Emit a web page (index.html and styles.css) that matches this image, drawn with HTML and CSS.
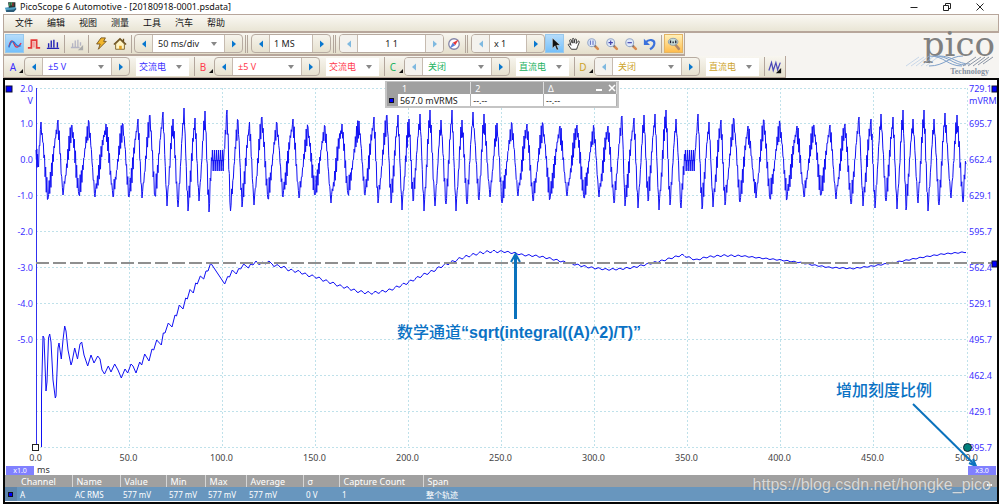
FILE: index.html
```html
<!DOCTYPE html>
<html lang="zh-CN">
<head>
<meta charset="utf-8">
<title>PicoScope 6 Automotive</title>
<link rel="stylesheet" href="styles.css">
</head>
<body>
<svg class="defs" aria-hidden="true">
  <symbol id="prev" viewBox="0 0 6 8"><path d="M5 0.5v7L1 4z" fill="currentColor"/></symbol>
  <symbol id="next" viewBox="0 0 6 8"><path d="M1 0.5v7L5 4z" fill="currentColor"/></symbol>
  <symbol id="lens" viewBox="0 0 16 16"><path d="M9.500 9.500l4 4" stroke="#d98a4e" stroke-width="3" stroke-linecap="round"/><path d="M9 9l2 2" stroke="#6f7480" stroke-width="2"/><circle cx="6.500" cy="6.500" r="4.500" fill="#dfe9fb" stroke="#97a9c8" stroke-width="1.300"/></symbol>
</svg>

<header class="titlebar">
  <svg class="app-icon" viewBox="0 0 16 14"><path d="M1 8l11-2 3 2-2 4-10 1z" fill="#4f9fc4"/><path d="M2 11l10-1 3-2v2l-3 3-9 0z" fill="#2b5a78"/><path d="M5 1h9v6l-8 1z" fill="#233"/><path d="M7 2v4M9 1v4" stroke="#47c46a"/><path d="M11 2v4" stroke="#e33"/></svg>
  <h1>PicoScope 6 Automotive - [20180918-0001.psdata]</h1>
  <div class="window-buttons">
    <button aria-label="最小化"><svg viewBox="0 0 10 10"><path d="M1.500 5.500h7" stroke="#222"/></svg></button>
    <button aria-label="还原"><svg viewBox="0 0 10 10"><path d="M1.500 3.500h5v5h-5zM3.500 3.500v-2h5v5h-2" fill="none" stroke="#222"/></svg></button>
    <button aria-label="关闭窗口"><svg viewBox="0 0 10 10"><path d="M1.500 1.500l7 7m0-7l-7 7" stroke="#222"/></svg></button>
  </div>
</header>

<nav class="menubar">
  <button>文件</button><button>编辑</button><button>视图</button><button>测量</button><button>工具</button><button>汽车</button><button>帮助</button>
</nav>

<section class="toolbars">
  <div class="toolbar-rows">
    <div class="toolbar main-tools">
      <button class="tool active" aria-label="示波器"><svg viewBox="0 0 16 16"><path d="M1 11c2-8 4-8 6-3s4 5 8-1" fill="none" stroke="#e0304a" stroke-width="1.500"/><path d="M1 12c3-8 4-8 6-6s3 6 8 4" fill="none" stroke="#2878d8" stroke-width="1.500"/></svg></button>
      <button class="tool" aria-label="余辉"><svg viewBox="0 0 16 16"><path d="M1 12.500h4v-9h6v9h4" fill="none" stroke="#e53a3a" stroke-width="2"/><path d="M7.500 5v7" stroke="#f5a0a0" stroke-width="3"/></svg></button>
      <button class="tool" aria-label="频谱"><svg viewBox="0 0 16 16"><path d="M1 13h14M3 12V7M6 12V4M9 12V3M13 12V6" stroke="#2424b8" stroke-width="1.600"/></svg></button>
      <span class="sep"></span>
      <button class="tool" aria-label="标尺"><svg viewBox="0 0 16 16"><path d="M1 12h10M3 12V7M6 12V4M9 12V3M12 10V6" stroke="#b5b5c4" stroke-width="1.500"/><path d="M15 9v6H9z" fill="#aaa"/></svg></button>
      <span class="sep"></span>
      <button class="tool" aria-label="自动设置"><svg viewBox="0 0 16 16"><path d="M8 1h5l-2 4h3L5 14l2-6H3z" fill="#f2b62c" stroke="#70501c"/></svg></button>
      <button class="tool" aria-label="主页"><svg viewBox="0 0 16 16"><path d="M3 8v6h10V8L8 3z" fill="#fff4c4" stroke="#775b20"/><path d="M1 8.500L8 2l7 6.500M12 2v4" fill="none" stroke="#6b501c" stroke-width="1.500"/><path d="M7 10h3v4H7z" fill="#e0a020"/></svg></button>
      <span class="sep"></span>
      <div class="spinner">
        <button aria-label="时基减小"><svg><use href="#prev"/></svg></button>
        <label class="drop field-wide"><select aria-label="时基"><option>50 ms/div</option></select></label>
        <button aria-label="时基增大"><svg><use href="#next"/></svg></button>
      </div>
      <span class="sep double"></span>
      <div class="spinner">
        <button aria-label="采样减少"><svg><use href="#prev"/></svg></button>
        <input class="field-samples" aria-label="采样数" value="1 MS">
        <button aria-label="采样增加"><svg><use href="#next"/></svg></button>
      </div>
      <span class="sep double"></span>
      <div class="spinner">
        <button class="off" aria-label="上一缓冲"><svg><use href="#prev"/></svg></button>
        <input class="field-buffer" aria-label="缓冲区" value="1 1">
        <button class="off" aria-label="下一缓冲"><svg><use href="#next"/></svg></button>
      </div>
      <button class="tool" aria-label="缓冲导航"><svg viewBox="0 0 16 16"><circle cx="8" cy="8" r="6" fill="#fff" stroke="#8585a8" stroke-width="1.500"/><path d="M13 3L9.500 9.500l-3-3z" fill="#e63838"/><path d="M3 13l3.500-6.500 3 3z" fill="#5a80d8"/></svg></button>
      <span class="sep double"></span>
      <div class="spinner">
        <button class="off" aria-label="缩小倍数"><svg><use href="#prev"/></svg></button>
        <input class="field-zoom" aria-label="缩放倍数" value="x 1">
        <button aria-label="放大倍数"><svg><use href="#next"/></svg></button>
      </div>
      <button class="tool active" aria-label="选择"><svg viewBox="0 0 16 16"><path d="M5 1v12l3-3 2 5 2-1-2-4.500h4z" fill="#111" stroke="#fff" stroke-width=".5"/></svg></button>
      <button class="tool" aria-label="平移"><svg viewBox="0 0 16 16"><path d="M5 14L1.500 9c0-1.500 1.500-1.500 3 .5L3 4c.2-1.300 1.500-1.300 2 0l1 3V2.500c.3-1.300 1.700-1.300 2 0V7l1-4c.5-1.200 1.700-1 1.800.3L10.500 7.500 12.500 5c1-.8 1.800 0 1.500 1l-2 5-1 3z" fill="#fff" stroke="#222"/></svg></button>
      <button class="tool" aria-label="窗口缩放"><svg viewBox="0 0 16 16"><use href="#lens"/><path d="M5 4v5M8 4v5" stroke="#4556b8"/></svg></button>
      <button class="tool" aria-label="放大"><svg viewBox="0 0 16 16"><use href="#lens"/><path d="M4 6.500h5M6.500 4v5" stroke="#4040a8" stroke-width="1.300"/></svg></button>
      <button class="tool" aria-label="缩小"><svg viewBox="0 0 16 16"><use href="#lens"/><path d="M4 6.500h5" stroke="#4040a8" stroke-width="1.300"/></svg></button>
      <button class="tool" aria-label="撤销"><svg viewBox="0 0 16 16"><path d="M3 6c4-4 10-3 10 1 0 3-2 5-5 7" fill="none" stroke="#3c72dc" stroke-width="2.500"/><path d="M1 2v7h7z" fill="#3c72dc"/></svg></button>
      <span class="sep"></span>
      <button class="tool hot" aria-label="缩放全览"><svg viewBox="0 0 16 16"><path d="M9 8l4.500 5.500" stroke="#b08868" stroke-width="3" stroke-linecap="round"/><ellipse cx="7" cy="5.500" rx="5.500" ry="4" fill="#c8dcd8" stroke="#8798a8"/><path d="M4 4v3M7 5v2M10 4v3" stroke="#223" stroke-width="1.500"/></svg></button>
    </div>

    <div class="toolbar">
      <div class="channel ch-a">
        <button class="ch-name">A</button>
        <div class="spinner">
          <button aria-label="A 量程减小"><svg><use href="#prev"/></svg></button>
          <label class="drop field-range"><select aria-label="A 量程"><option>±5 V</option></select></label>
          <button aria-label="A 量程增大"><svg><use href="#next"/></svg></button>
        </div>
        <label class="drop coupling"><select aria-label="A 耦合"><option>交流电</option></select></label>
      </div>
      <div class="channel ch-b">
        <button class="ch-name">B</button>
        <div class="spinner">
          <button aria-label="B 量程减小"><svg><use href="#prev"/></svg></button>
          <label class="drop field-range"><select aria-label="B 量程"><option>±5 V</option></select></label>
          <button aria-label="B 量程增大"><svg><use href="#next"/></svg></button>
        </div>
        <label class="drop coupling"><select aria-label="B 耦合"><option>交流电</option></select></label>
      </div>
      <div class="channel ch-c">
        <button class="ch-name">C</button>
        <div class="spinner">
          <button class="off" aria-label="C 量程减小"><svg><use href="#prev"/></svg></button>
          <label class="drop field-range"><select aria-label="C 量程"><option>关闭</option></select></label>
          <button aria-label="C 量程增大"><svg><use href="#next"/></svg></button>
        </div>
        <label class="drop coupling"><select aria-label="C 耦合"><option>直流电</option></select></label>
      </div>
      <div class="channel ch-d">
        <button class="ch-name">D</button>
        <div class="spinner">
          <button class="off" aria-label="D 量程减小"><svg><use href="#prev"/></svg></button>
          <label class="drop field-range"><select aria-label="D 量程"><option>关闭</option></select></label>
          <button aria-label="D 量程增大"><svg><use href="#next"/></svg></button>
        </div>
        <label class="drop coupling"><select aria-label="D 耦合"><option>直流电</option></select></label>
      </div>
      <button class="tool" aria-label="数学通道"><svg viewBox="0 0 16 16"><path d="M1 12L4 3l2 9 3-9 2 8 3-8" fill="none" stroke="#4a48b8" stroke-width="1.400"/><path d="M15 9v6H9z" fill="#111"/></svg></button>
    </div>
  </div>

  <div class="brand">
    <span class="brand-name">pico</span>
    <svg class="brand-wave" viewBox="0 0 90 12" aria-hidden="true">
      <g fill="none" stroke="#a9c3e2">
        <path d="M1 11L14 2M6 11L19 2M11 11L24 1M16 11L29 1M21 11L33 2" opacity=".6"/>
        <path d="M24 1c16 0 18 10 33 10M29 1c16 0 18 9 32 9M34 1c14 0 18 8 31 8M24 11c16 0 20-10 34-10" stroke="#7d9fc9"/>
        <path d="M58 11L71 2M63 11L76 2M68 11L80 2M73 10L84 2M78 9L88 2" stroke="#8b95a5"/>
      </g>
    </svg>
    <span class="brand-sub">Technology</span>
  </div>
</section>

<main class="workspace">
  <div class="scope">
    <svg class="chart" viewBox="5 80 992 395" role="img" aria-label="通道 A 电压与数学通道有效值">
      <g id="grid" class="grid"></g>
      <g id="axis-labels"></g>
      <path class="axis" d="M36.500 88V447"/>
      <polyline id="voltage" class="trace"/>
      <polyline id="rms" class="trace"/>
      <path class="ruler" d="M36 263H992"/>
      <g class="handle"><rect x="6" y="86" width="6" height="6"/><rect x="992" y="86" width="5" height="6"/><rect x="992" y="261" width="5" height="6"/></g>
      <rect x="32.500" y="444.500" width="6" height="6" fill="#fff" stroke="#222"/>
      <circle cx="967.500" cy="447.500" r="4" fill="#00807c" stroke="#123"/>
      <g class="arrow"><path d="M515.500 319V256" stroke-width="3"/><path d="M511 262l4.500-8 4.500 8" stroke-width="2"/><path d="M913 404l62 61" stroke-width="2"/><path d="M969 463l7 3-3-7" stroke-width="2"/></g>
      <text class="note" x="397" y="338">数学通道<tspan class="formula">“sqrt(integral((A)^2)/T)”</tspan></text>
      <text class="note" x="836" y="396">增加刻度比例</text>
    </svg>
    <button class="scale scale-left">x1.0</button>
    <button class="scale scale-right">x3.0</button>

    <div class="legend">
      <table>
        <thead><tr><th class="key"></th><th>1</th><th>2</th><th>Δ</th></tr></thead>
        <tbody><tr><td class="key"><i class="swatch"></i></td><td>567.0 mVRMS</td><td>--.--</td><td>--.--</td></tr></tbody>
      </table>
      <div class="legend-buttons">
        <button aria-label="折叠"><svg viewBox="0 0 8 8"><path d="M1 6h6" stroke="#fff" stroke-width="2"/></svg></button>
        <button aria-label="关闭图例"><svg viewBox="0 0 8 8"><path d="M1 1l6 6m0-6L1 7" stroke="#fff" stroke-width="1.500"/></svg></button>
      </div>
    </div>
  </div>

  <div class="results">
    <table class="measurements">
      <colgroup><col class="c-key"><col class="c-channel"><col class="c-name"><col class="c-value"><col class="c-min"><col class="c-max"><col class="c-avg"><col class="c-sigma"><col class="c-count"><col></colgroup>
      <thead><tr><th></th><th>Channel</th><th>Name</th><th>Value</th><th>Min</th><th>Max</th><th>Average</th><th>σ</th><th>Capture Count</th><th>Span</th></tr></thead>
      <tbody><tr><td class="key"><i class="swatch"></i></td><td>A</td><td>AC RMS</td><td>577 mV</td><td>577 mV</td><td>577 mV</td><td>577 mV</td><td>0 V</td><td>1</td><td>整个轨迹</td></tr></tbody>
    </table>
    <button class="collapse" aria-label="折叠测量"></button>
    <span class="watermark">https://blog.csdn.net/hongke_pico</span>
  </div>
</main>
<script src="chart.js"></script>
</body>
</html>
```
FILE: styles.css
```css
* { box-sizing: border-box; }
body {
  margin: 0;
  min-height: 100vh;
  display: flex;
  flex-direction: column;
  background: #fff;
  font: 9px/12px "Noto Sans", "Noto Sans CJK SC", sans-serif;
  color: #222;
}
button, input, select { font: inherit; color: inherit; margin: 0; padding: 0; border: 0; border-radius: 0; background: none; }
.defs { position: absolute; width: 0; height: 0; }

.titlebar { display: flex; align-items: center; height: 14px; padding-left: 4px; }
.app-icon { width: 13px; height: 12px; margin-right: 3px; }
.titlebar h1 { flex: 1; margin: 0; font-size: 9px; line-height: 12px; font-weight: 400; color: #111; }
.window-buttons { display: flex; padding-right: 3px; }
.window-buttons button { width: 33px; height: 12px; display: grid; place-items: center; }
.window-buttons svg { width: 10px; height: 10px; }

.menubar {
  display: flex;
  height: 19px;
  margin-left: 3px;
  padding-left: 4px;
  border: 1px solid #b7a69b;
  border-bottom-width: 2px;
  background: linear-gradient(#faf8f3, #e9e5d5);
}
.menubar button { width: 32px; color: #111; }

.toolbars { display: flex; justify-content: space-between; margin-left: 3px; background: #f6f4f1; }
.toolbar-rows { display: flex; flex-direction: column; align-items: flex-start; }
.toolbar {
  display: flex;
  align-items: center;
  height: 22px;
  padding: 0 1px;
  border: 1px solid #b7a69b;
  border-top: 0;
  background: linear-gradient(#f8f6f0, #e5dfcc);
}
.main-tools { height: 23px; border-bottom-width: 2px; }
.tool { width: 19px; height: 19px; display: grid; place-items: center; }
.tool svg { width: 14px; height: 14px; }
.tool.active { background: linear-gradient(#b5dcfb, #74c0fb); border: 1px solid #98c8ec; }
.tool.hot { background: linear-gradient(#fff0b8, #ffbd4e); border: 1px solid #e4b464; }
.sep { width: 1px; height: 18px; margin: 0 2px; background: #b3a69c; }
.sep.double { width: 3px; margin: 0 3px 0 2px; background: none; border: 1px solid #b3a69c; border-width: 0 1px; }

.spinner { display: flex; height: 19px; border: 1px solid #b7aba1; border-radius: 4px; overflow: hidden; }
.spinner > button { width: 17px; display: grid; place-items: center; color: #0877cf; }
.spinner > button svg { width: 6px; height: 8px; }
.spinner > .off { color: #7fb9e0; background: #f4f2ee; }
.drop { position: relative; display: flex; background: #fff; }
.drop select { width: 100%; padding-left: 5px; appearance: none; }
.drop::after {
  content: "";
  position: absolute;
  right: 7px;
  top: 50%;
  margin-top: -2px;
  border: 3px solid transparent;
  border-top: 4px solid #888;
  border-bottom: 0;
  pointer-events: none;
}
.spinner input { background: #fff; border: 0; }
.spinner .drop, .spinner input { border: 1px solid #c6bbb0; border-width: 0 1px; }
.field-wide { width: 73px; }
.field-samples { width: 44px; padding-left: 4px; }
.field-buffer { width: 69px; text-align: center; }
.field-zoom { width: 38px; padding-left: 4px; }
.field-range { width: 70px; }

.channel { display: flex; align-items: center; width: 190px; height: 19px; border-right: 1px solid #b3a69c; padding-right: 5px; }
.ch-name { position: relative; width: 19px; height: 19px; padding-right: 3px; font-size: 10px; }
.ch-name::after { content: ""; position: absolute; right: 1px; bottom: 3px; border: 2px solid #111; border-top-color: transparent; border-left-color: transparent; }
.coupling { width: 53px; height: 18px; margin-left: auto; }
.coupling select { padding-left: 3px; }
.ch-a { color: #3a2fff; }
.ch-b { color: #ff3b4d; }
.ch-c { color: #21b15d; }
.ch-d { color: #cda329; }

.brand { display: flex; flex-direction: column; align-items: flex-end; padding-right: 4px; }
.brand-name { font: 34px/22px "DejaVu Serif", serif; color: #808080; }
.brand-wave { width: 90px; height: 12px; }
.brand-sub { font: 700 8px/10px "Liberation Serif", serif; color: #8590a0; padding-right: 6px; }

.workspace { margin-left: 3px; border: 2px solid #050505; }
.scope { position: relative; background: #fff; }
.chart { display: block; width: 100%; height: auto; }
.grid path { stroke: #bfe1ea; stroke-dasharray: 2 2; }
.axis { stroke: #3030f0; stroke-width: 1; }
.trace { fill: none; stroke: #1010f4; stroke-width: 1; }
.ruler { stroke: #8f8f8f; stroke-width: 2; stroke-dasharray: 13 4; }
.handle { fill: #00f; stroke: #113; }
.arrow { fill: none; stroke: #0a72bd; }
.volt { fill: #3b30ff; text-anchor: end; }
.rms-label { fill: #3b30ff; }
.time { fill: #444; text-anchor: middle; }
.unit { fill: #333; }
.note { font: 500 16px "Noto Sans CJK SC", sans-serif; fill: #0a72c4; }
.formula { font-family: "Liberation Sans", sans-serif; font-weight: 700; }
.scale { position: absolute; bottom: 0; width: 28px; height: 9px; background: #8080ff; color: #fff; font-size: 7px; line-height: 9px; }
.scale-left { left: 1px; }
.scale-right { right: 1px; }

.legend { position: absolute; top: 1px; left: 38.3%; width: 234px; border: 1px solid #c4c4c4; border-width: 1px 2px 2px; }
.legend table { width: 100%; border-collapse: collapse; table-layout: fixed; }
.legend th, .legend td { height: 12px; padding: 0 0 0 2px; line-height: 11px; text-align: left; font-weight: 400; }
.legend th { background: #a0a0a0; color: #fff; border-right: 1px solid #ddd; padding-left: 4px; }
.legend td { background: #fff; border-right: 1px solid #b0b0b0; }
.legend .key { width: 11px; background: #a0a0a0; border: 0; }
.legend-buttons { position: absolute; top: 1px; right: 1px; display: flex; gap: 5px; }
.legend-buttons button { width: 8px; height: 10px; }
.legend-buttons svg { display: block; width: 8px; height: 8px; }
.swatch { display: block; width: 5px; height: 5px; background: #00f; border: 1px solid #112; }

.results { position: relative; border-bottom: 1px solid #fff; }
.measurements { width: 100%; border-collapse: collapse; table-layout: fixed; color: #fff; }
.measurements th, .measurements td { padding: 0 0 0 3px; text-align: left; font-weight: 400; white-space: nowrap; }
.measurements th { height: 12px; padding-left: 4px; line-height: 11px; background: #a0a0a0; border-right: 1px solid #d6d6d6; }
.measurements th:first-child, .measurements th:last-child { border-right: 0; }
.measurements td { height: 14px; font-size: 8px; line-height: 13px; background: #6896be; }
.measurements .key { background: #5f86ab; }
.c-key { width: 12px; }
.c-channel { width: 55px; }
.c-name { width: 48px; }
.c-value { width: 46px; }
.c-min { width: 39px; }
.c-max { width: 41px; }
.c-avg { width: 57px; }
.c-sigma { width: 36px; }
.c-count { width: 84px; }
.collapse { position: absolute; right: 5px; top: 9px; width: 5px; height: 2px; background: #fff; }
.watermark { position: absolute; right: 6px; top: 0; font: 16px/20px "Liberation Sans", sans-serif; color: #e4e4e4; text-shadow: 0 0 1px #777; opacity: .85; }
```
FILE: chart.js
```js
const NS = "http://www.w3.org/2000/svg";
const grid = document.getElementById("grid");
const labels = document.getElementById("axis-labels");
const LEFT = 36, TOP = 88, COL = 93.1, ROW = 35.95;

function add(parent, tag, attrs, text) {
  const el = document.createElementNS(NS, tag);
  for (const key in attrs) el.setAttribute(key, attrs[key]);
  if (text) el.textContent = text;
  parent.appendChild(el);
}

const volts = ["2.0", "1.0", "0.0", "-1.0", "-2.0", "-3.0", "-4.0", "-5.0"];
const rmsTicks = ["729.1", "695.7", "662.4", "629.1", "595.7", "562.4", "529.1", "495.7", "462.4", "429.1", "395.7"];
for (let i = 0; i <= 10; i++) {
  const x = Math.floor(LEFT + i * COL) + 0.5;
  const y = Math.floor(TOP + i * ROW) + 0.5;
  add(grid, "path", { d: `M${x} ${TOP}V447.5` });
  add(grid, "path", { d: `M${LEFT} ${y}H967` });
  add(labels, "text", { class: "time", x: x - 1, y: 461 }, (i * 50).toFixed(1));
  add(labels, "text", { class: "rms-label", x: 969, y: y + 3 }, rmsTicks[i]);
  if (volts[i]) add(labels, "text", { class: "volt", x: 33, y: y + 3 }, volts[i]);
}
add(labels, "text", { class: "volt", x: 33, y: 104 }, "V");
add(labels, "text", { class: "rms-label", x: 969, y: 104 }, "mVRM");
add(labels, "text", { class: "unit", x: 37, y: 473 }, "ms");

/* Alternating crests and troughs of the alternator ripple */
const extremes = [
  36,150, 38,164, 41,122, 48,199, 58,120, 63,195, 72,125, 79,195, 89,122, 95,197, 106,124, 113,197, 123,124, 129,197,
  138,119, 142,198, 150,115, 155,196, 163,112, 167,206, 173,119, 178,207, 184,108, 188,211, 195,118, 199,201, 205,111, 209,212, 212,160,
  223,160, 227,110, 230.5,211, 238,120, 242,207, 249.5,122, 254,205, 262,117, 268,199, 277,123, 283,197, 293,119, 299,198,
  308,127, 315,195, 325,126, 331,203, 342,124, 348,194, 359,121, 365,195, 374,117, 378,203, 387,115, 391,203, 398,115,
  402,210, 409,119, 413,201, 420,114, 424,211, 430,110, 435,206, 441,120, 446,204, 452,110, 456,211, 462,120, 467,204,
  473,112, 479,200, 484,114, 490,197, 497,123, 502,203, 512,124, 518,196, 527,124, 533,201, 543,124, 550,199, 560,126,
  567,196, 577,125, 584,198, 594,128, 599,197, 608,126, 614,203, 622,116, 625,206, 634,118, 638,208, 644,115, 648,201,
  655,114, 659,210, 666,110, 670,205, 676,119, 681,208, 685,160, 694,160, 698,114, 702,209, 709,122, 713,207, 721,120,
  725,205, 734,119, 740,202, 748,126, 756,198, 764,120, 770,199, 780,123, 787,199, 797,126, 804,197, 814,125, 821,195,
  830,125, 836,199, 845,124, 851,204, 859,117, 863,206, 871,119, 875,208, 881,114, 886,201, 893,117, 897,209, 903,110,
  906,210, 913,119, 918,203, 924,110, 928,211, 934,119, 939,205, 945,113, 951,198, 957,115, 963,202, 966,164
];
const MID = 160;
const wave = [];
for (let i = 0; i + 3 < extremes.length; i += 2) {
  const [x0, y0, x1, y1] = extremes.slice(i, i + 4);
  if (y0 === MID && y1 === MID) {
    for (let x = x0; x < x1; x += 2) wave.push([x, 161], [x + 0.4, 150], [x + 0.8, 160], [x + 1.2, 171], [x + 1.6, 160]);
    continue;
  }
  wave.push([x0, y0]);
  const span = x1 - x0;
  const steps = Math.max(5, Math.round(span / 0.6));
  const body0 = MID + (y0 - MID) * 0.76;
  const body1 = MID + (y1 - MID) * 0.8;
  const tooth = span > 6 ? 10 : 8;
  for (let k = 1; k < steps; k++) {
    const t = k / steps;
    const base = body0 + (body1 - body0) * (1 - Math.cos(Math.PI * t)) / 2;
    const jitter = Math.sin(k * 12.9898 + i * 7.233);
    const dir = k % 2 ? 1 : -1;
    wave.push([x0 + span * t, base + dir * tooth * (0.6 + 0.4 * jitter)]);
  }
}
wave.push([966, 164]);

const rms = [
  41.5,447, 41.5,394, 43,336, 44,338, 46,391, 47,382, 48.5,338, 49.7,334, 51,342, 53,380, 55.3,398, 56,396, 58,348, 59,343, 61.3,359,
  63,340, 64.7,326, 66,331, 68,350, 71,365, 72,362, 74.7,348, 77.5,359, 80,344, 81.7,342, 84,355, 87.7,366, 91,355, 94,363,
  97.7,356, 100,359, 102,370, 104.5,374, 108.3,366, 111,372, 114.7,364, 118,370, 121.3,378, 125,369, 127.7,373, 131,364, 133,366, 136,373,
  139.7,362, 141.7,365, 144.7,354, 149,361, 152,349, 153.7,350, 156.7,340, 161.3,345, 163.3,333, 165,333, 168.3,323,
  172,327, 175,315, 176.5,316, 179.3,305, 183,309, 185.7,298, 187.3,299, 190,289.5, 193.3,293, 195.7,283, 197.3,284,
  200.3,276, 203.7,279, 206,271, 208,271, 210.7,263, 224.7,284, 227.7,276.5, 229.5,277, 232.3,270, 236.3,274, 238.7,268.5,
  240.7,269, 243.7,264, 248.3,268, 250.7,264, 253,265, 256,261, 259.3,265, 262.3,262, 265.3,264, 269,261, 273,265
];
/* Slow section: average level, with the charging ripple laid over it */
const slow = [
  273,265, 283,267, 289,270, 300,272, 307,275, 316,277, 323,280, 332,283, 340,286, 348,288, 356,291, 365,292.5, 372,293,
  380,292, 390,290, 397,287, 407,283, 415,279, 423,275, 433,271, 442,266, 452,262, 460,258.500, 470,255.500, 480,253, 490,251.500, 503,251.500,
  510,252.500, 517,253.500, 523,255, 537,256, 550,258.500, 562,261.500, 573,264, 590,267.500, 607,269.500, 620,269, 633,267.500, 650,263.500, 663,260.500,
  673,257.500, 682,255, 696,260, 707,257, 723,255.500, 743,256, 760,258, 780,260, 800,262.500, 813,265, 830,267.500, 853,268.500, 873,266,
  897,262, 913,259, 927,256.500, 943,254, 967,252
];
for (let i = 0; i + 3 < slow.length; i += 2) {
  const [x0, y0, x1, y1] = slow.slice(i, i + 4);
  for (let x = x0; x < x1; x += 1) {
    const size = x < 500 ? 1.2 : x < 740 ? 0.8 : 0.5;
    rms.push(x, y0 + (y1 - y0) * (x - x0) / (x1 - x0) + size * Math.sin(x * 0.9));
  }
}

document.getElementById("voltage").setAttribute("points", wave.map(p => p.join(",")).join(" "));
document.getElementById("rms").setAttribute("points", rms.join(" "));
```
